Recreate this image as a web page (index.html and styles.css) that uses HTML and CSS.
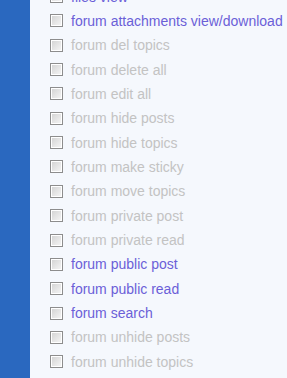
FILE: index.html
```html
<!DOCTYPE html>
<html>
<head>
<meta charset="utf-8">
<link rel="stylesheet" href="styles.css">
</head>
<body>
<div class="page">
  <div class="sidebar"></div>
  <div class="main">
    <ul class="perms">
      <li class="row on"><span class="box"></span><span class="label">files view</span></li>
      <li class="row on"><span class="box"></span><span class="label">forum attachments view/download</span></li>
      <li class="row off"><span class="box"></span><span class="label">forum del topics</span></li>
      <li class="row off"><span class="box"></span><span class="label">forum delete all</span></li>
      <li class="row off"><span class="box"></span><span class="label">forum edit all</span></li>
      <li class="row off"><span class="box"></span><span class="label">forum hide posts</span></li>
      <li class="row off"><span class="box"></span><span class="label">forum hide topics</span></li>
      <li class="row off"><span class="box"></span><span class="label">forum make sticky</span></li>
      <li class="row off"><span class="box"></span><span class="label">forum move topics</span></li>
      <li class="row off"><span class="box"></span><span class="label">forum private post</span></li>
      <li class="row off"><span class="box"></span><span class="label">forum private read</span></li>
      <li class="row on"><span class="box"></span><span class="label">forum public post</span></li>
      <li class="row on"><span class="box"></span><span class="label">forum public read</span></li>
      <li class="row on"><span class="box"></span><span class="label">forum search</span></li>
      <li class="row off"><span class="box"></span><span class="label">forum unhide posts</span></li>
      <li class="row off"><span class="box"></span><span class="label">forum unhide topics</span></li>
    </ul>
  </div>
</div>
</body>
</html>
```
FILE: styles.css
```css
html, body {
  margin: 0;
  padding: 0;
  height: 100%;
  overflow: hidden;
  background: #f5f8fd;
}
.page {
  display: flex;
  height: 378px;
  font-family: "Liberation Sans", Arial, sans-serif;
  font-size: 14px;
}
.sidebar {
  width: 30px;
  flex: none;
  background: #2a68bf;
}
.main {
  flex: 1;
  background: #f5f8fd;
  overflow: hidden;
}
.perms {
  list-style: none;
  margin: -15.6px 0 0 0;
  padding: 0;
}
.row {
  display: flex;
  align-items: center;
  height: 24.35px;
  padding-left: 20px;
  gap: 8px;
  white-space: nowrap;
}
.box {
  width: 13px;
  height: 13px;
  box-sizing: border-box;
  border: 1px solid #8d8d8d;
  box-shadow: inset 0 0 0 1px #ffffff;
  background: linear-gradient(135deg, #d2d2d2 0%, #ececec 70%, #f6f6f6 100%);
  flex: none;
}
.on .label {
  color: #6b5fd8;
}
.off .label {
  color: #c3c3c3;
}
```
